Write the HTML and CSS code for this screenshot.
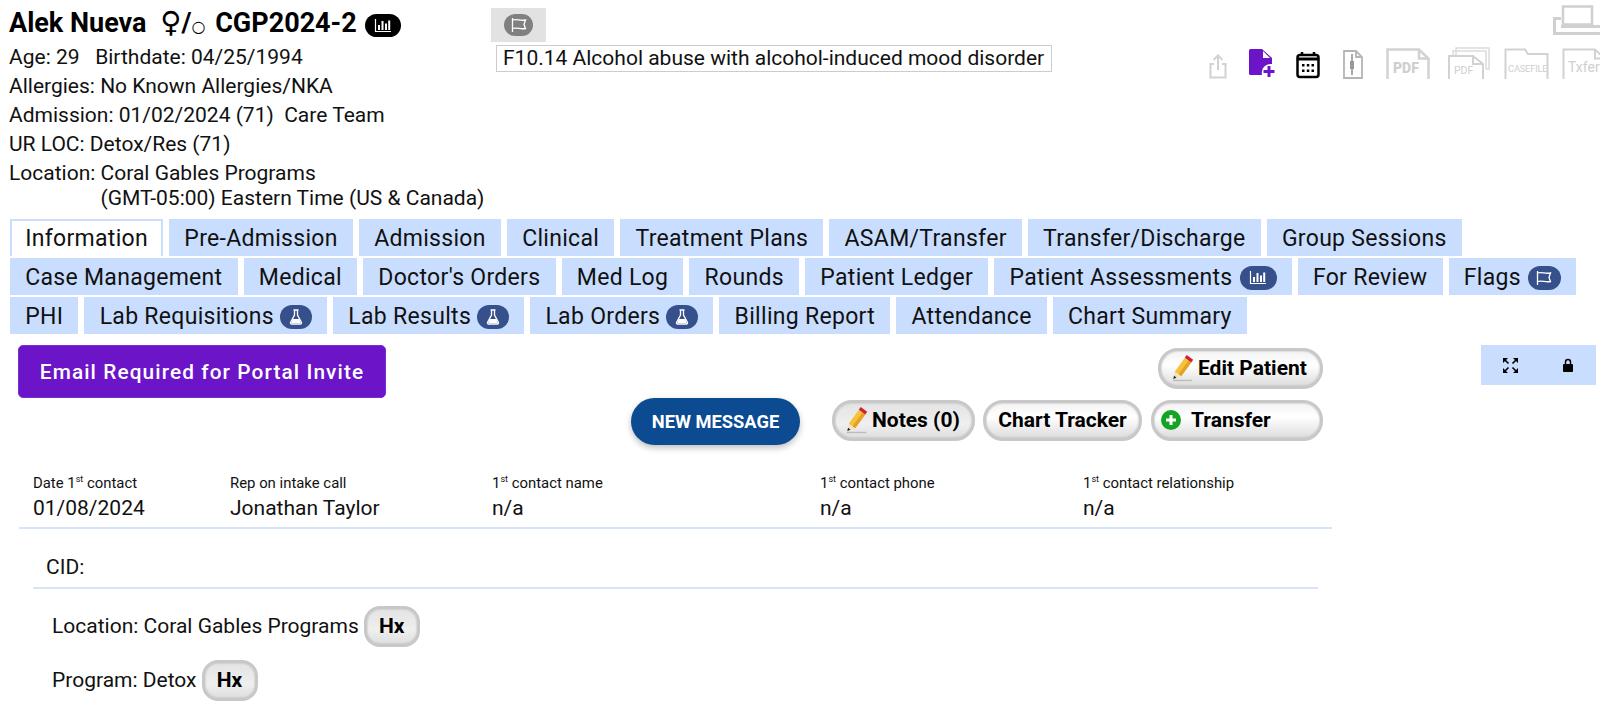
FILE: index.html
```html
<!DOCTYPE html>
<html lang="en">
<head>
  <meta charset="utf-8">
  <meta name="viewport" content="width=device-width, initial-scale=1">
  <title>Patient Chart</title>
  <link rel="stylesheet" href="styles.css">
</head>
<body>
  <svg class="defs" width="0" height="0" aria-hidden="true">
    <symbol id="i-chart" viewBox="0 0 18 15">
      <path d="M1.500 1v12.500H17" fill="none" stroke="currentColor" stroke-width="1.200"/>
      <path d="M4 7h2v5H4zM7.500 3h2v9h-2zM11 5.500h2V12h-2zM14.200 2.500h2V12h-2z" fill="currentColor"/>
    </symbol>
    <symbol id="i-flag" viewBox="0 0 16 14">
      <path d="M1.500 0v14" fill="none" stroke="currentColor" stroke-width="1.300"/>
      <path d="M1.500 2c4-1.500 8 1.200 13 0l-1.500 4.500 1.500 4c-5 1.200-9-1.500-13 0" fill="none" stroke="currentColor" stroke-width="1.300"/>
    </symbol>
    <symbol id="i-flask" viewBox="0 0 14 16">
      <path d="M4.500 1h5M5.500 1v5L1.600 13.200c-.4.9.1 1.800 1 1.800h8.800c.9 0 1.400-.9 1-1.800L8.500 6V1" fill="none" stroke="currentColor" stroke-width="1.300"/>
      <path d="M3.800 10h6.400l1.700 4H2.100z" fill="currentColor"/>
    </symbol>
    <symbol id="i-pencil" viewBox="0 0 26 30">
      <path d="M2 28.500h21" stroke="#bbb" stroke-width="1.500"/>
      <path d="M15 4l7 5-11 15-7-5z" fill="#f5c33b"/>
      <path d="M19 6.800l3 2.200-11 15-3-2.200z" fill="#e6a024"/>
      <path d="M17 1l7 5-2 3-7-5z" fill="#d0202f"/>
      <path d="M4 19l7 5-6 2.500-2-1z" fill="#efe3c4"/>
      <path d="M3.300 23.500l2.700 2-3.500 1.500z" fill="#222"/>
    </symbol>
  </svg>

  <div class="page">
    <header class="chart-head">
      <div class="patient">
        <h1 class="patient-name">Alek Nueva <span class="sym-f">♀</span>/<span class="sym-o">○</span> CGP2024-2 <span class="badge badge-black"><svg width="18" height="15"><use href="#i-chart"/></svg></span></h1>
        <div class="patient-line">Age: 29 &nbsp; Birthdate: 04/25/1994</div>
        <div class="patient-line">Allergies: No Known Allergies/NKA</div>
        <div class="patient-line">Admission: 01/02/2024 (71) &nbsp;Care Team</div>
        <div class="patient-line">UR LOC: Detox/Res (71)</div>
        <div class="patient-loc">
          <span>Location:&nbsp;</span>
          <span>Coral Gables Programs<br>(GMT-05:00) Eastern Time (US &amp; Canada)</span>
        </div>
      </div>

      <div class="diag">
        <div class="flag-btn"><span class="badge badge-gray"><svg width="16" height="14"><use href="#i-flag"/></svg></span></div>
        <div class="diag-box">F10.14 Alcohol abuse with alcohol-induced mood disorder</div>
      </div>

      <div class="tools">
        <svg class="printer" width="47" height="30" viewBox="0 0 47 30">
          <path d="M10 1.500h29v18H10z" fill="none" stroke="#d0d0d0" stroke-width="2.500"/>
          <path d="M8 13.500H1.500v15H47" fill="none" stroke="#d0d0d0" stroke-width="3"/>
          <path d="M8 21.500h39" stroke="#d0d0d0" stroke-width="3"/>
        </svg>
        <div class="tool-row">
          <svg width="18" height="25" viewBox="0 0 18 25">
            <path d="M5 10H1.500v13.500h15V10H13M9 16V2M4.500 6L9 1.500 13.500 6" fill="none" stroke="#d2d2d2" stroke-width="2"/>
          </svg>
          <svg width="28" height="30" viewBox="0 0 28 30">
            <path d="M1 1.500A1.500 1.500 0 0 1 2.500 0H14l10 9v6a9 9 0 0 0-10 11H2.500A1.500 1.500 0 0 1 1 24.500z" fill="#6b14c8"/>
            <path d="M15 2l7 7h-7z" fill="#fff"/>
            <path d="M21 17v11M15.500 22.500h11" stroke="#6b14c8" stroke-width="3"/>
          </svg>
          <svg width="24" height="28" viewBox="0 0 24 28">
            <rect x="1.500" y="4" width="21" height="22" rx="2.500" fill="none" stroke="#000" stroke-width="2.500"/>
            <path d="M1.500 8h21" stroke="#000" stroke-width="3"/>
            <path d="M6 1v4M18 1v4" stroke="#000" stroke-width="2.500"/>
            <path d="M6 13h2.500v2.500H6zM10.800 13h2.500v2.500h-2.500zM15.500 13H18v2.500h-2.500zM6 18.500h2.500V21H6zM10.800 18.500h2.500V21h-2.500zM15.500 18.500H18V21h-2.500z"/>
          </svg>
          <svg width="20" height="29" viewBox="0 0 20 29">
            <path d="M1 1h12l6 6v21H1zM13 1v6h6" fill="none" stroke="#b5b5b5" stroke-width="1.800"/>
            <path d="M9 4v21" stroke="#aaa" stroke-width="2"/>
            <rect x="7" y="11" width="4" height="8" fill="#999"/>
          </svg>
          <svg width="44" height="31" viewBox="0 0 44 31">
            <path d="M1.500 31V1.500H33l9.500 9V31M33 1.500v9h9.500" fill="none" stroke="#d2d2d2" stroke-width="2.500"/>
            <text x="7" y="25" class="tool-text tool-text-bold">PDF</text>
          </svg>
          <svg width="42" height="32" viewBox="0 0 42 32">
            <path d="M8 8V1h33v21h-3M5 12V4h33v18" fill="none" stroke="#dcdcdc" stroke-width="1.500"/>
            <path d="M1 32V9h24l10 8v15M25 9v8h10" fill="#fff" stroke="#d2d2d2" stroke-width="2"/>
            <text x="6" y="27" class="tool-text tool-text-small">PDF</text>
          </svg>
          <svg width="45" height="31" viewBox="0 0 45 31">
            <path d="M1.500 31V1.500H21l3 4.500h19.500V31" fill="none" stroke="#d2d2d2" stroke-width="2"/>
            <text x="4" y="24" class="tool-text tool-text-case">CASEFILE</text>
          </svg>
          <svg width="44" height="31" viewBox="0 0 44 31">
            <path d="M1.500 31V1.500H33l9.500 9V31M33 1.500v9h9.500" fill="none" stroke="#d2d2d2" stroke-width="2"/>
            <text x="6" y="24" class="tool-text">Txfer</text>
          </svg>
        </div>
      </div>
    </header>

    <nav class="tabs">
      <a class="tab tab-active">Information</a>
      <a class="tab">Pre-Admission</a>
      <a class="tab">Admission</a>
      <a class="tab">Clinical</a>
      <a class="tab">Treatment Plans</a>
      <a class="tab">ASAM/Transfer</a>
      <a class="tab">Transfer/Discharge</a>
      <a class="tab">Group Sessions</a>
      <a class="tab">Case Management</a>
      <a class="tab">Medical</a>
      <a class="tab">Doctor's Orders</a>
      <a class="tab">Med Log</a>
      <a class="tab">Rounds</a>
      <a class="tab">Patient Ledger</a>
      <a class="tab">Patient Assessments <span class="badge badge-wide"><svg width="18" height="15"><use href="#i-chart"/></svg></span></a>
      <a class="tab">For Review</a>
      <a class="tab">Flags <span class="badge"><svg width="16" height="14"><use href="#i-flag"/></svg></span></a>
      <a class="tab">PHI</a>
      <a class="tab tab-lab">Lab Requisitions <span class="badge"><svg width="14" height="16"><use href="#i-flask"/></svg></span></a>
      <a class="tab tab-lab">Lab Results <span class="badge"><svg width="14" height="16"><use href="#i-flask"/></svg></span></a>
      <a class="tab tab-lab">Lab Orders <span class="badge"><svg width="14" height="16"><use href="#i-flask"/></svg></span></a>
      <a class="tab">Billing Report</a>
      <a class="tab">Attendance</a>
      <a class="tab">Chart Summary</a>
    </nav>

    <section class="actions">
      <div class="actions-main">
        <div class="actions-top">
          <button class="btn-email">Email Required for Portal Invite</button>
          <button class="gloss gloss-edit"><svg width="24" height="28"><use href="#i-pencil"/></svg>Edit Patient</button>
        </div>
        <div class="actions-bottom">
          <button class="btn-message">NEW MESSAGE</button>
          <button class="gloss gloss-gray gloss-notes"><svg width="24" height="28"><use href="#i-pencil"/></svg>Notes (0)</button>
          <button class="gloss gloss-tracker">Chart Tracker</button>
          <button class="gloss gloss-transfer">
            <svg width="20" height="20" viewBox="0 0 20 20">
              <circle cx="10" cy="10" r="10" fill="#12a422"/>
              <path d="M10 5v10M5 10h10" stroke="#fff" stroke-width="3"/>
            </svg>Transfer</button>
        </div>
      </div>
      <div class="view-panel">
        <svg width="15" height="15" viewBox="0 0 15 15">
          <path d="M0 0h5L0 5zM15 0v5l-5-5zM0 15v-5l5 5zM15 15h-5l5-5z"/>
          <path d="M2 2l3.500 3.500M13 2L9.500 5.500M2 13l3.500-3.500M13 13L9.500 9.500" stroke="#000" stroke-width="1.600"/>
        </svg>
        <svg width="12" height="14" viewBox="0 0 12 14">
          <rect x="1" y="6" width="10" height="8" rx="1"/>
          <path d="M3.500 6V4a2.500 2.500 0 0 1 5 0v2" fill="none" stroke="#000" stroke-width="1.500"/>
        </svg>
      </div>
    </section>

    <section class="contact">
      <div class="contact-col"><label>Date 1<sup>st</sup> contact</label><div>01/08/2024</div></div>
      <div class="contact-col"><label>Rep on intake call</label><div>Jonathan Taylor</div></div>
      <div class="contact-col"><label>1<sup>st</sup> contact name</label><div>n/a</div></div>
      <div class="contact-col"><label>1<sup>st</sup> contact phone</label><div>n/a</div></div>
      <div class="contact-col"><label>1<sup>st</sup> contact relationship</label><div>n/a</div></div>
    </section>

    <div class="cid">CID:</div>

    <div class="history">
      <div class="hist-row">Location: Coral Gables Programs <button class="gloss gloss-gray gloss-hx">Hx</button></div>
      <div class="hist-row">Program: Detox <button class="gloss gloss-gray gloss-hx">Hx</button></div>
    </div>
  </div>
</body>
</html>
```

FILE: styles.css
```css
html, body {
  margin: 0;
  padding: 0;
  background: #fff;
}

body {
  font-family: Roboto, "Liberation Sans", sans-serif;
  font-size: 21px;
  color: #111;
  overflow: hidden;
}

.defs {
  position: absolute;
}

.page {
  width: 1600px;
  height: 712px;
  overflow: hidden;
}

/* top part */
.chart-head {
  display: flex;
  height: 219px;
}

.patient {
  width: 482px;
  padding-left: 9px;
  flex-shrink: 0;
}

.patient-name {
  margin: 0;
  padding-top: 6px;
  height: 37px;
  font-size: 27px;
  line-height: 33px;
  font-weight: 700;
  color: #000;
  white-space: nowrap;
}

.sym-f {
  margin-left: 7px;
  font-family: "DejaVu Sans", sans-serif;
  font-weight: 400;
  font-size: 29px;
}

.sym-o {
  margin-right: 3px;
  font-family: "DejaVu Sans", sans-serif;
  font-weight: 400;
  font-size: 16px;
}

.patient-line {
  height: 29px;
  line-height: 29px;
  white-space: nowrap;
}

.patient-loc {
  display: flex;
  line-height: 25px;
  padding-top: 2px;
  white-space: nowrap;
}

.badge {
  display: inline-flex;
  align-items: center;
  justify-content: center;
  width: 33px;
  height: 24px;
  border-radius: 12px;
  background: #36508c;
  color: #fff;
  vertical-align: 1px;
}

.badge-wide {
  width: 37px;
}

.badge-black {
  background: #000;
  height: 23px;
  width: 36px;
  margin-left: 2px;
  vertical-align: -1px;
}

.badge-gray {
  background: #808080;
  width: 29px;
  height: 22px;
}

.diag {
  width: 717px;
  flex-shrink: 0;
  padding-top: 8px;
}

.flag-btn {
  display: flex;
  align-items: center;
  justify-content: center;
  width: 55px;
  height: 34px;
  background: #e2e2e2;
}

.diag-box {
  display: inline-block;
  margin: 3px 0 0 5px;
  padding: 0 7px 0 6px;
  height: 25px;
  line-height: 25px;
  border: 1px solid #ccc;
  white-space: nowrap;
}

.tools {
  flex: 1;
  display: flex;
  flex-direction: column;
  align-items: flex-end;
  padding-top: 5px;
  min-width: 0;
}

.printer {
  display: block;
}

.tool-row {
  display: grid;
  grid-template-columns: 39px 48px 47px 43px 62px 56px 58px 44px;
  align-items: end;
  height: 44px;
  width: 397px;
  margin-right: -6px;
  flex-shrink: 0;
}

.tool-row svg {
  display: block;
}

.tool-text {
  font-family: Roboto, sans-serif;
  font-size: 14px;
  fill: #cfcfcf;
}

.tool-text-bold {
  font-weight: 900;
}

.tool-text-small {
  font-size: 10.500px;
}

.tool-text-case {
  font-size: 9.500px;
  letter-spacing: -0.3px;
}

/* tabs */
.tabs {
  display: flex;
  flex-wrap: wrap;
  gap: 2px 6px;
  padding-left: 10px;
  width: 1590px;
  box-sizing: border-box;
}

.tab {
  display: flex;
  align-items: center;
  gap: 7px;
  height: 37px;
  padding: 2px 15.200px 0;
  background: #c9deff;
  font-size: 23px;
  letter-spacing: 0.3px;
  color: #111;
  white-space: nowrap;
  box-sizing: border-box;
}

.tab-lab {
  gap: 6px;
}

.tab-active {
  background: #fff;
  border: 2px solid #c9deff;
  border-bottom: 0;
  padding: 0 13.200px;
}

/* buttons */
.actions {
  display: flex;
  margin-top: 11px;
  height: 100px;
}

.actions-main {
  width: 1323px;
  padding-left: 18px;
  box-sizing: border-box;
  flex-shrink: 0;
}

.actions-top {
  display: flex;
  justify-content: space-between;
  align-items: flex-start;
  height: 53px;
}

.actions-bottom {
  display: flex;
  justify-content: flex-end;
  align-items: flex-start;
}

.btn-email {
  width: 368px;
  height: 53px;
  background: #6b14c8;
  color: #fff;
  border: 1px solid #7d2bd6;
  border-radius: 5px;
  font: 500 20.800px Roboto, sans-serif;
  letter-spacing: 1.100px;
}

.gloss {
  display: inline-flex;
  align-items: center;
  gap: 3px;
  height: 41px;
  padding: 0 10px 2px;
  border: 3px solid #c8c8c8;
  border-radius: 20px;
  background: linear-gradient(#f3f3f3, #fff 40%, #dcdcdc);
  box-shadow: inset 0 0 2px #aaa;
  font: 700 21px Roboto, sans-serif;
  color: #000;
  box-sizing: border-box;
  white-space: nowrap;
}

.gloss-gray {
  background: linear-gradient(#e3e3e3, #efefef 60%, #dedede);
}

.gloss-edit {
  width: 165px;
  margin-top: 3px;
}

.btn-message {
  width: 169px;
  height: 47px;
  margin-right: 32px;
  background: #0c4a91;
  color: #fff;
  border: 0;
  border-radius: 24px;
  box-shadow: 0 3px 6px rgba(0, 0, 0, .25);
  font: 700 18.300px Roboto, sans-serif;
}

.gloss-notes {
  width: 143px;
  margin: 2px 8px 0 0;
}

.gloss-tracker {
  width: 159px;
  margin: 2px 9px 0 0;
  justify-content: center;
}

.gloss-transfer {
  width: 172px;
  margin-top: 2px;
  gap: 10px;
  padding-left: 7px;
}

.view-panel {
  display: flex;
  align-items: center;
  justify-content: space-around;
  width: 115px;
  height: 40px;
  margin-left: 158px;
  background: #c9deff;
}

/* contact block */
.contact {
  display: grid;
  grid-template-columns: 197px 262px 328px 263px 1fr;
  width: 1313px;
  margin-left: 19px;
  padding: 29px 0 5px 14px;
  box-sizing: border-box;
  border-bottom: 2px solid #d5e4fb;
}

.contact-col label {
  display: block;
  height: 21px;
  line-height: 18px;
  font-size: 14.900px;
}

.contact-col div {
  line-height: 27px;
  height: 27px;
}

sup {
  font-size: 9px;
  line-height: 0;
}

.cid {
  width: 1285px;
  height: 60px;
  margin-left: 33px;
  padding: 26px 0 8px 13px;
  line-height: 24px;
  box-sizing: border-box;
  border-bottom: 2px solid #d5e4fb;
}

.history {
  padding: 10px 0 0 52px;
}

.hist-row {
  display: flex;
  align-items: center;
  gap: 5px;
  height: 54px;
}

.gloss-hx {
  width: 56px;
  justify-content: center;
  padding: 0;
  border-radius: 16px;
}

.tab-lab .badge {
  width: 32px;
}
```
